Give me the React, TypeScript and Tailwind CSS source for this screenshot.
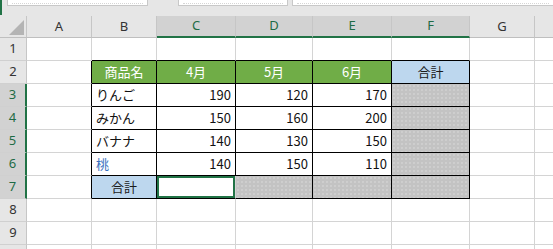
import React from "react";

const COLS = ["A", "B", "C", "D", "E", "F", "G", "H"];
const SEL_COLS = ["C", "D", "E", "F"];
const SEL_ROWS = [3, 4, 5, 6, 7];

type Cell = {
  text?: string;
  kind?: "green" | "blue" | "pattern" | "num" | "name" | "active" | "peach";
};

const data: Record<string, Cell> = {
  B2: { text: "商品名", kind: "green" },
  C2: { text: "4月", kind: "green" },
  D2: { text: "5月", kind: "green" },
  E2: { text: "6月", kind: "green" },
  F2: { text: "合計", kind: "blue" },
  B3: { text: "りんご", kind: "name" },
  C3: { text: "190", kind: "num" },
  D3: { text: "120", kind: "num" },
  E3: { text: "170", kind: "num" },
  F3: { kind: "pattern" },
  B4: { text: "みかん", kind: "name" },
  C4: { text: "150", kind: "num" },
  D4: { text: "160", kind: "num" },
  E4: { text: "200", kind: "num" },
  F4: { kind: "pattern" },
  B5: { text: "バナナ", kind: "name" },
  C5: { text: "140", kind: "num" },
  D5: { text: "130", kind: "num" },
  E5: { text: "150", kind: "num" },
  F5: { kind: "pattern" },
  B6: { text: "桃", kind: "peach" },
  C6: { text: "140", kind: "num" },
  D6: { text: "150", kind: "num" },
  E6: { text: "110", kind: "num" },
  F6: { kind: "pattern" },
  B7: { text: "合計", kind: "blue" },
  C7: { kind: "active" },
  D7: { kind: "pattern" },
  E7: { kind: "pattern" },
  F7: { kind: "pattern" },
};

const TABLE_COLS = ["B", "C", "D", "E", "F"];

function inTable(r: number, c: string) {
  return r >= 2 && r <= 7 && TABLE_COLS.includes(c);
}

function GridCell({ r, c }: { r: number; c: string }) {
  const key = `${c}${r}`;
  const cell = data[key];
  const ci = COLS.indexOf(c);
  const right = COLS[ci + 1];
  const rightBlack =
    (inTable(r, c) || (right !== undefined && inTable(r, right))) && key !== "C7";
  const bottomBlack = inTable(r, c) || inTable(r + 1, c);

  let cls =
    "relative box-border h-[23px] border-r border-b flex items-center overflow-hidden whitespace-nowrap text-[13px] ";
  cls += rightBlack ? "border-r-black " : "border-r-[#d4d4d4] ";
  cls += bottomBlack ? "border-b-black " : "border-b-[#d4d4d4] ";

  if (!cell) return <div className={cls + "bg-white"} />;

  switch (cell.kind) {
    case "green":
      cls += "bg-[#70ad47] text-white justify-center";
      break;
    case "blue":
      cls += "bg-[#bdd7ee] text-[#1a1a1a] justify-center";
      break;
    case "pattern":
      cls +=
        "bg-[#c3c3c3] bg-[radial-gradient(circle,#d2d2d2_0.6px,transparent_1px)] bg-[length:4px_4px]";
      break;
    case "num":
      cls += "bg-white text-[#111] justify-end pr-[4px]";
      break;
    case "name":
      cls += "bg-white text-[#111] justify-start pl-[4px]";
      break;
    case "peach":
      cls += "bg-white text-[#3a72c0] justify-start pl-[4px]";
      break;
    case "active":
      cls += "bg-white";
      break;
  }

  return (
    <div className={cls}>
      {cell.text}
      {cell.kind === "active" && (
        <div className="absolute inset-0 border-2 border-[#217346]" />
      )}
    </div>
  );
}

export default function App() {
  const rows = [1, 2, 3, 4, 5, 6, 7, 8, 9, 10];
  return (
    <div
      className="w-[553px] h-[249px] overflow-hidden bg-white text-[#222]"
      style={{ fontFamily: '"Noto Sans CJK JP", "Noto Sans", sans-serif' }}
    >
      {/* top strip */}
      <div className="relative flex h-[16px] bg-[#e6e6e6]">
        <div className="w-[2px] h-[15px] bg-[#217346]" />
        <div className="ml-[5px] w-[141px] h-[6px] bg-white border-x border-b border-[#c8c8c8]">
          <div className="mx-[4px] h-[4px] border-b border-dotted border-[#d6d6d6]" />
        </div>
        <div className="ml-[30px] w-[110px] h-[6px] bg-white border-x border-b border-[#c8c8c8]">
          <div className="mx-[4px] h-[4px] border-b border-dotted border-[#d6d6d6]" />
        </div>
        <div className="ml-[4px] flex-1 h-[6px] bg-white border-l border-b border-[#c8c8c8]">
          <div className="mx-[4px] h-[4px] border-b border-dotted border-[#d6d6d6]" />
        </div>
      </div>

      <div className="grid w-[600px] grid-cols-[27px_65px_65px_79px_77px_79px_78px_65px_65px]">
        {/* corner */}
        <div className="relative box-border h-[22px] bg-[#e6e6e6] border-r border-b border-r-[#c6c6c6] border-b-[#bfbfbf]">
          <svg className="absolute left-[9px] top-[4px]" width="15" height="15" viewBox="0 0 15 15">
            <polygon points="15,0 15,15 0,15" fill="#b4b4b4" />
          </svg>
        </div>
        {COLS.map((c) => {
          const sel = SEL_COLS.includes(c);
          return (
            <div
              key={c}
              className={
                "box-border h-[22px] flex items-center justify-center border-r border-r-[#c6c6c6] text-[13px] " +
                (sel
                  ? "bg-[#d2d2d2] text-[#1e6b45] border-b-2 border-b-[#217346]"
                  : "bg-[#e6e6e6] text-[#333] border-b border-b-[#bfbfbf]")
              }
              style={{ fontFamily: '"Noto Sans", sans-serif' }}
            >
              {c !== "H" ? c : ""}
            </div>
          );
        })}

        {rows.map((r) => {
          const sel = SEL_ROWS.includes(r);
          return (
            <React.Fragment key={r}>
              <div
                className={
                  "box-border h-[23px] flex items-center justify-center border-b border-b-[#d0d0d0] text-[13px] " +
                  (sel
                    ? "bg-[#d2d2d2] text-[#1e6b45] border-r-2 border-r-[#217346]"
                    : "bg-[#e6e6e6] text-[#333] border-r border-r-[#c6c6c6]")
                }
                style={{ fontFamily: '"Noto Sans", sans-serif' }}
              >
                {r < 10 ? r : ""}
              </div>
              {COLS.map((c) => (
                <GridCell key={c + r} r={r} c={c} />
              ))}
            </React.Fragment>
          );
        })}
      </div>
    </div>
  );
}
